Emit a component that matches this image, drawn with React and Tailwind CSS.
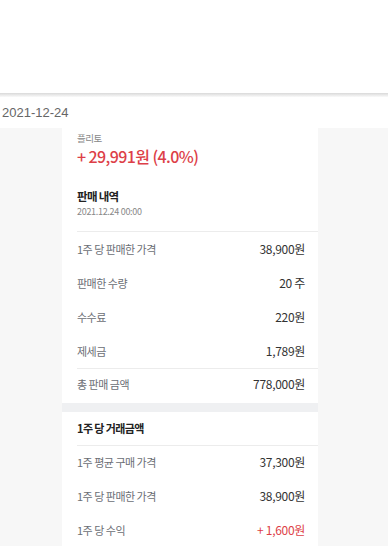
import React from "react"

const font = { fontFamily: '"Noto Sans CJK KR", "Noto Sans", sans-serif' }

const sale = [
  ["1주 당 판매한 가격", "38,900원"],
  ["판매한 수량", "20 주"],
  ["수수료", "220원"],
  ["제세금", "1,789원"],
]

const perShare = [
  ["1주 평균 구매 가격", "37,300원"],
  ["1주 당 판매한 가격", "38,900원"],
]

function Row({ label, value, valueClass = "text-[#333]", className = "" }) {
  return (
    <div className={"flex h-[34px] items-center justify-between pr-[13px] leading-[16px] " + className}>
      <span className="text-[11px] tracking-[-0.5px] text-[#6b6e75]">{label}</span>
      <span className={"text-[12px] tracking-[-0.3px] " + valueClass}>{value}</span>
    </div>
  )
}

export default function App() {
  return (
    <div className="h-[546px] overflow-hidden bg-white" style={font}>
      <div className="h-[93px] bg-white" />
      <div className="h-[4px] bg-gradient-to-b from-[#d9d9d9] to-[#fafafa]" />
      <div
        className="flex h-[31px] items-center pl-[2px] text-[13px] text-[#666]"
        style={{ fontFamily: '"Liberation Sans", Arial, sans-serif' }}
      >
        2021-12-24
      </div>
      <div className="h-[418px] bg-[#f7f7f7]">
        <div className="ml-[62px] h-full w-[256px] bg-white">
          <div className="pl-[15px] pt-[2px]">
            <div className="text-[9.5px] leading-[16px] tracking-[-0.5px] text-[#888]">플리토</div>
            <div className="text-[16px] font-medium leading-[20px] tracking-[-0.6px] text-[#dd3f48]">
              + 29,991원 (4.0%)
            </div>
            <div className="mt-[22px] text-[11.5px] font-bold leading-[17px] tracking-[-0.7px] text-[#222]">
              판매 내역
            </div>
            <div className="text-[9px] leading-[13px] tracking-[-0.3px] text-[#888]">2021.12.24 00:00</div>
            <div className="mt-[13px] border-t border-[#ececec]">
              {sale.map(([l, v]) => (
                <Row key={l} label={l} value={v} />
              ))}
            </div>
            <div className="border-t border-[#ececec]">
              <Row label="총 판매 금액" value="778,000원" className="pb-[5px]" />
            </div>
          </div>
          <div className="h-[9px] bg-[#eff0f2]" />
          <div className="pl-[15px]">
            <div className="flex h-[33px] items-center pb-[1px] text-[11px] font-bold tracking-[-0.6px] text-[#222]">
              1주 당 거래금액
            </div>
            <div className="border-t border-[#ececec]">
              {perShare.map(([l, v]) => (
                <Row key={l} label={l} value={v} className="pb-[3px]" />
              ))}
              <Row label="1주 당 수익" value="+ 1,600원" valueClass="text-[#dd3f48]" className="pb-[3px]" />
            </div>
          </div>
        </div>
      </div>
    </div>
  )
}
